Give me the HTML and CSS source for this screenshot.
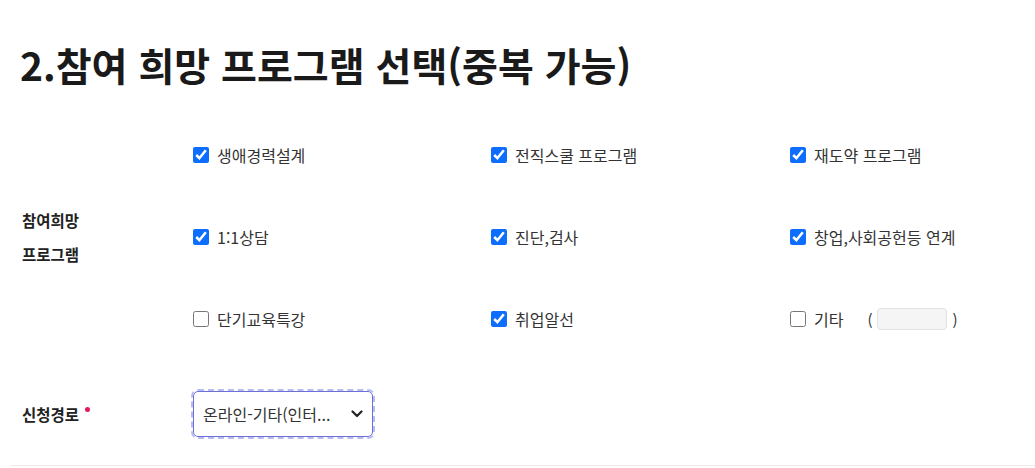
FILE: index.html
```html
<!DOCTYPE html>
<html lang="ko">
  <head>
    <meta charset="UTF-8" />
    <meta name="viewport" content="width=device-width, initial-scale=1.0" />
    <title>참여 희망 프로그램 선택</title>
    <link rel="stylesheet" href="styles.css">
  </head>
  <body>
    <main class="apply">
      <h2 class="apply-title">2.참여 희망 프로그램 선택(중복 가능)</h2>

      <div class="form-row program-row">
        <div class="row-label">참여희망<br>프로그램</div>
        <div class="program-grid">
          <label class="check"><input type="checkbox" checked> 생애경력설계</label>
          <label class="check"><input type="checkbox" checked> 전직스쿨 프로그램</label>
          <label class="check"><input type="checkbox" checked> 재도약 프로그램</label>

          <label class="check"><input type="checkbox" checked> 1:1상담</label>
          <label class="check"><input type="checkbox" checked> 진단,검사</label>
          <label class="check"><input type="checkbox" checked> 창업,사회공헌등 연계</label>

          <label class="check"><input type="checkbox"> 단기교육특강</label>
          <label class="check"><input type="checkbox" checked> 취업알선</label>
          <div class="check etc">
            <label class="check"><input type="checkbox"> 기타</label>
            <span class="paren">(</span>
            <input type="text" class="etc-input">
            <span class="paren">)</span>
          </div>
        </div>
      </div>

      <div class="form-row route-row">
        <div class="row-label">신청경로<span class="required"></span></div>
        <div class="select-wrap">
          <select class="route-select">
            <option>온라인-기타(인터...</option>
          </select>
          <svg class="chevron" width="12" height="8" viewBox="0 0 12 8">
            <path d="M1.5 1.5 L6 6 L10.5 1.5" fill="none" stroke="#222" stroke-width="2.2" stroke-linecap="round" stroke-linejoin="round"/>
          </svg>
        </div>
      </div>
    </main>
  </body>
</html>
```

FILE: styles.css
```css
* {
  box-sizing: border-box;
}
body {
  margin: 0;
  background-color: #ffffff;
  font-family: "Noto Sans CJK KR", "Noto Sans", sans-serif;
  color: #333333;
}
.apply {
  padding: 0 0 0 10px;
}
.apply-title {
  margin: 0;
  padding: 36px 0 0 10px;
  height: 114px;
  font-size: 39px;
  font-weight: 700;
  letter-spacing: 0;
  line-height: 56px;
  color: #1a1a1a;
}
.form-row {
  display: grid;
  grid-template-columns: 171px 1fr;
  align-items: center;
  padding-left: 12px;
}
.row-label {
  font-size: 15.5px;
  font-weight: 700;
  line-height: 34px;
  color: #222222;
}
.program-grid {
  display: grid;
  grid-template-columns: 298px 299px 1fr;
  grid-auto-rows: 82px;
  align-items: center;
}
.check {
  display: flex;
  align-items: center;
  gap: 8px;
  font-size: 16px;
  color: #333333;
}
.check input[type="checkbox"] {
  width: 16px;
  height: 16px;
  margin: 0;
  accent-color: #0d6efd;
}
.etc {
  gap: 0;
}
.paren {
  margin-left: 24px;
  font-size: 15px;
}
.etc .paren:last-child {
  margin-left: 6px;
}
.etc-input {
  width: 70px;
  height: 22px;
  margin-left: 4px;
  border: 1px solid #e2e2e2;
  border-radius: 4px;
  background-color: #f5f5f5;
}
.route-row {
  padding-top: 31px;
  padding-bottom: 28px;
  border-bottom: 1px solid #ececec;
}
.required {
  display: inline-block;
  width: 5px;
  height: 5px;
  margin-left: 6px;
  border-radius: 50%;
  background-color: #e8175d;
  vertical-align: 9px;
}
.select-wrap {
  position: relative;
  width: 180px;
}
.route-select {
  width: 180px;
  height: 46px;
  padding: 0 30px 0 9px;
  appearance: none;
  border: 1px solid #6b6fd8;
  border-radius: 5px;
  outline: 2px dashed #b9bcef;
  outline-offset: 0;
  background-color: #ffffff;
  font-family: "Noto Sans CJK KR", "Noto Sans", sans-serif;
  font-size: 16px;
  color: #333333;
}
.chevron {
  position: absolute;
  right: 10px;
  top: 19px;
  pointer-events: none;
}
```
